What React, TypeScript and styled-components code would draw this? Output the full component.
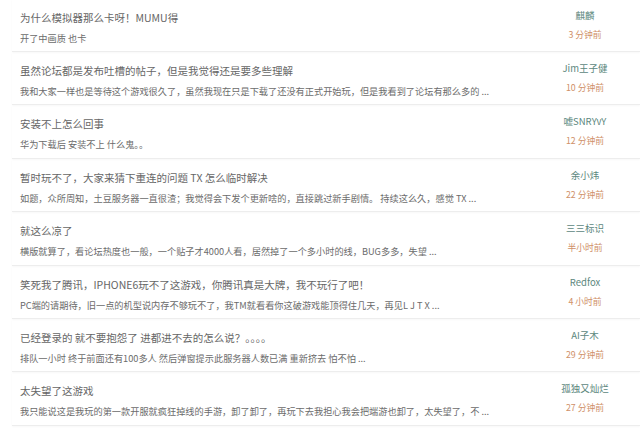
import React from 'react';
import styled, { createGlobalStyle } from 'styled-components';

const GlobalStyle = createGlobalStyle`
  html, body {
    margin: 0;
    padding: 0;
    background: #fff;
    overflow: hidden;
  }
  body {
    font-family: "Noto Sans CJK SC", "Noto Sans", sans-serif;
  }
`;

const List = styled.div`
  width: 640px;
  height: 436px;
  overflow: hidden;
  margin-top: -1.4px;
`;

const Row = styled.div`
  display: flex;
  align-items: flex-start;
  margin-left: 12px;
  padding: 9px 10px 3.4px 8px;
  border-bottom: 1px solid #ededed;
  box-shadow: 0 1px 2px rgba(0, 0, 0, 0.03);
`;

const Main = styled.div`
  flex: 1;
  min-width: 0;
`;

const Title = styled.div`
  font-size: 10.5px;
  line-height: 20px;
  color: #666;
  white-space: nowrap;
`;

const Summary = styled.div`
  font-size: 9.2px;
  line-height: 20px;
  color: #6b6b6b;
  white-space: nowrap;
`;

const Meta = styled.div`
  width: 90px;
  text-align: center;
  margin-top: -2px;
`;

const Author = styled.div`
  font-size: 9.5px;
  line-height: 19px;
  color: #5c877d;
  white-space: nowrap;
`;

const Time = styled.div`
  font-size: 8.8px;
  line-height: 19px;
  color: #cf9068;
  white-space: nowrap;
`;

type Post = { title: string; summary: string; author: string; time: string };

const posts: Post[] = [
  {
    title: '为什么模拟器那么卡呀！MUMU得',
    summary: '开了中画质 也卡',
    author: '麒麟',
    time: '3 分钟前',
  },
  {
    title: '虽然论坛都是发布吐槽的帖子，但是我觉得还是要多些理解',
    summary:
      '我和大家一样也是等待这个游戏很久了，虽然我现在只是下载了还没有正式开始玩，但是我看到了论坛有那么多的 ...',
    author: 'Jim王子健',
    time: '10 分钟前',
  },
  {
    title: '安装不上怎么回事',
    summary: '华为下载后 安装不上 什么鬼。。',
    author: '嘘SNRYvY',
    time: '12 分钟前',
  },
  {
    title: '暂时玩不了，大家来猜下重连的问题 TX 怎么临时解决',
    summary:
      '如题，众所周知，土豆服务器一直很渣；我觉得会下发个更新啥的，直接跳过新手剧情。 持续这么久，感觉 TX ...',
    author: '余小炜',
    time: '22 分钟前',
  },
  {
    title: '就这么凉了',
    summary:
      '横版就算了，看论坛热度也一般，一个贴子才4000人看，居然掉了一个多小时的线，BUG多多，失望 ...',
    author: '三三标识',
    time: '半小时前',
  },
  {
    title: '笑死我了腾讯，IPHONE6玩不了这游戏，你腾讯真是大牌，我不玩行了吧！',
    summary:
      'PC端的请期待，旧一点的机型说内存不够玩不了，我TM就看看你这破游戏能顶得住几天，再见L J T X ...',
    author: 'Redfox',
    time: '4 小时前',
  },
  {
    title: '已经登录的 就不要抱怨了 进都进不去的怎么说？。。。。',
    summary:
      '排队一小时 终于前面还有100多人 然后弹窗提示此服务器人数已满 重新挤去 怕不怕 ...',
    author: 'AI子木',
    time: '29 分钟前',
  },
  {
    title: '太失望了这游戏',
    summary:
      '我只能说这是我玩的第一款开服就疯狂掉线的手游，卸了卸了，再玩下去我担心我会把端游也卸了，太失望了，不 ...',
    author: '孤独又灿烂',
    time: '27 分钟前',
  },
];

const PostRow = ({ post }: { post: Post }) => (
  <Row>
    <Main>
      <Title>{post.title}</Title>
      <Summary>{post.summary}</Summary>
    </Main>
    <Meta>
      <Author>{post.author}</Author>
      <Time>{post.time}</Time>
    </Meta>
  </Row>
);

export default function App() {
  return (
    <>
      <GlobalStyle />
      <List>
        {posts.map((p, i) => (
          <PostRow key={i} post={p} />
        ))}
      </List>
    </>
  );
}
